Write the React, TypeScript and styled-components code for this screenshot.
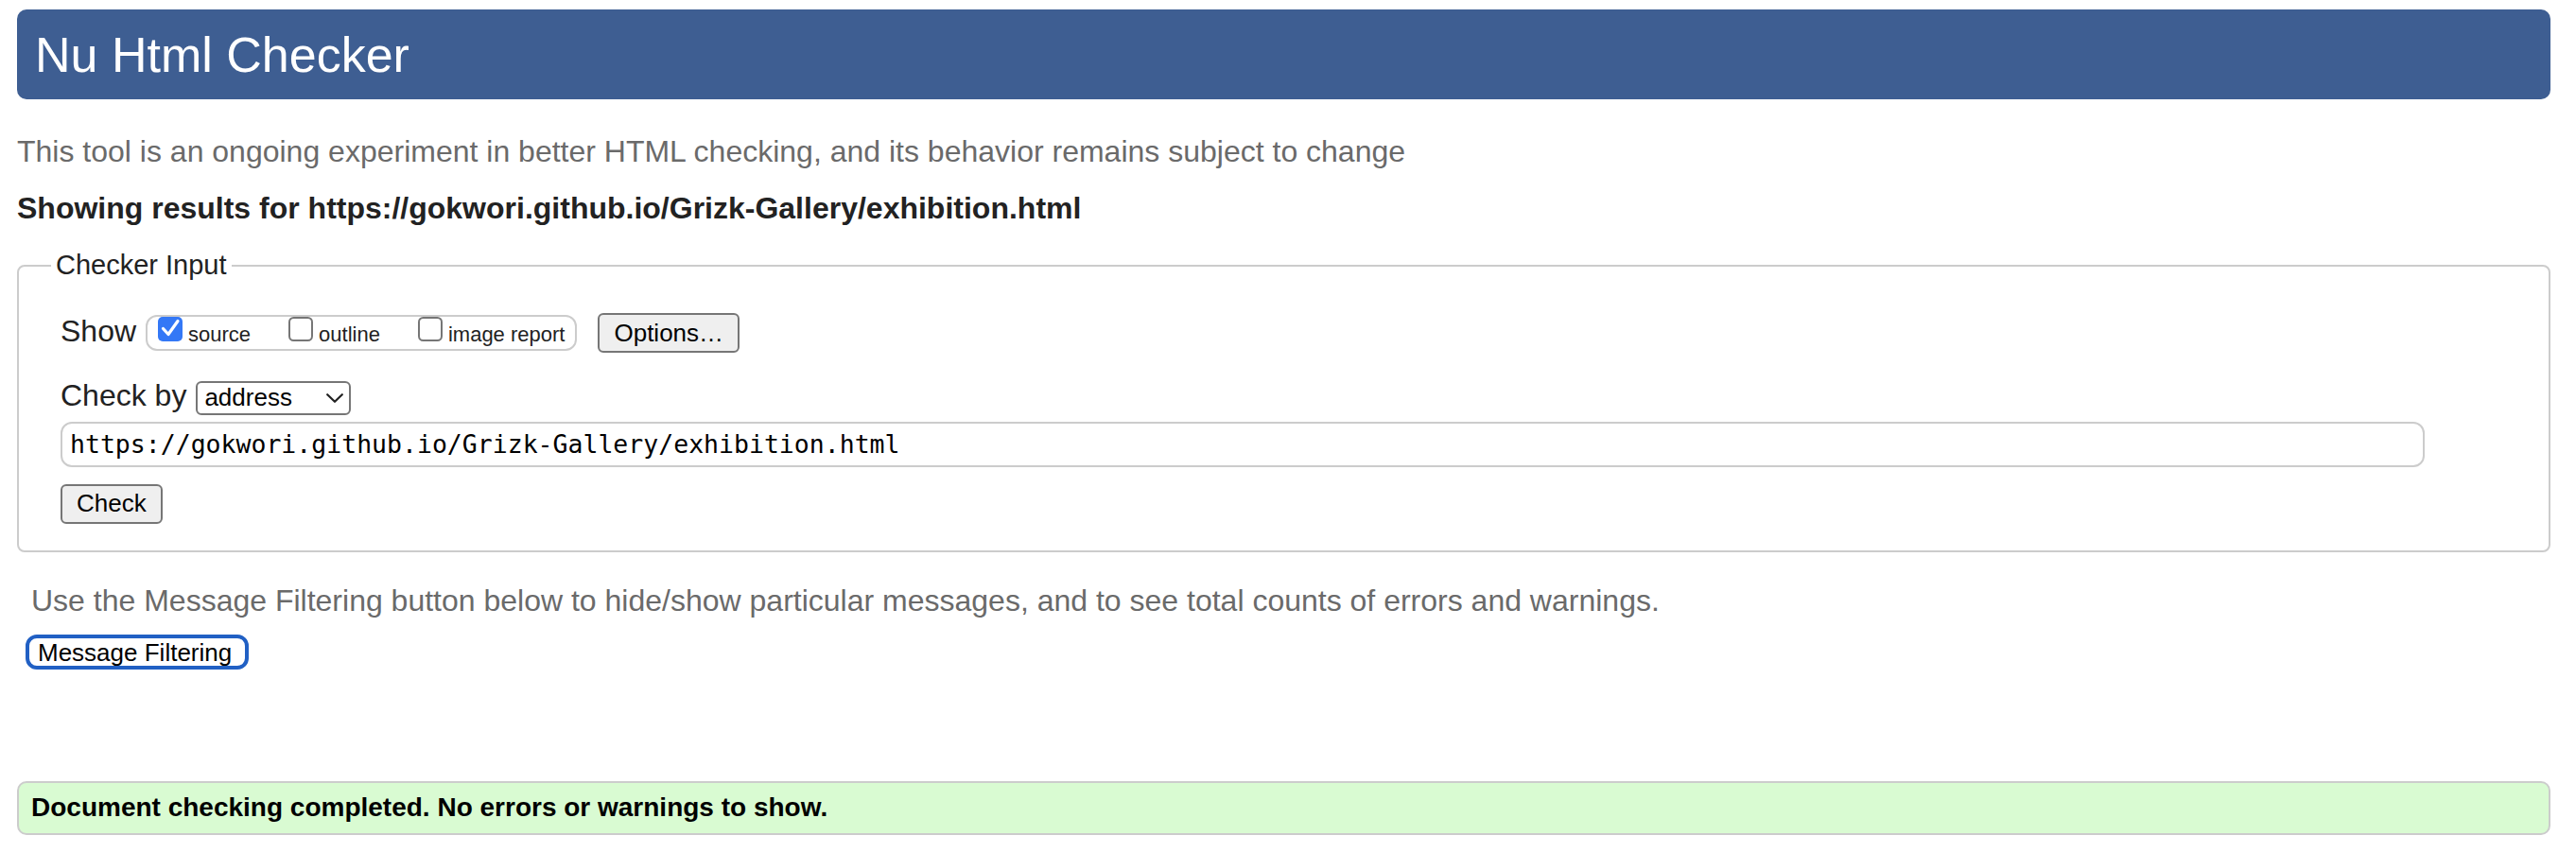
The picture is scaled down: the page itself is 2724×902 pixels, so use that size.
import React from "react";
import styled, { createGlobalStyle } from "styled-components";

const GlobalStyle = createGlobalStyle`
  html, body { margin: 0; padding: 0; background: #fff; }
  body {
    font-family: "Liberation Sans", Arial, Helvetica, sans-serif;
    color: #222;
  }
  *, *::before, *::after { box-sizing: border-box; }
`;

const Page = styled.main`
  padding: 10px 27px 0 18px;
`;

const Banner = styled.h1`
  margin: 0;
  height: 95px;
  padding: 0 19px;
  display: flex;
  align-items: center;
  background: #3e5e92;
  color: #fff;
  font-size: 52px;
  font-weight: 400;
  border-radius: 10px;
`;

const Note = styled.p<{ $strong?: boolean; $gap: number }>`
  margin: ${(p) => p.$gap}px 0 0;
  font-size: 32px;
  line-height: 36px;
  font-weight: ${(p) => (p.$strong ? 700 : 400)};
  color: ${(p) => (p.$strong ? "#222" : "#6a6a6a")};
`;

const CheckerFieldset = styled.fieldset`
  margin: 26px 0 0;
  padding: 34px 44px 28px 44px;
  border: 2px solid #ccc;
  border-radius: 8px;
  min-width: 0;
`;

const CheckerLegend = styled.legend`
  margin-left: -10px;
  padding: 0 5px;
  font-size: 29px;
  line-height: 33px;
  color: #222;
`;

const FormRow = styled.div<{ $mt?: number }>`
  display: flex;
  align-items: baseline;
  gap: 10px;
  margin-top: ${(p) => p.$mt ?? 0}px;
`;

const FieldLabel = styled.span`
  font-size: 32px;
  line-height: 36px;
  color: #222;
`;

const ToggleGroup = styled.div`
  display: flex;
  align-items: baseline;
  gap: 40px;
  height: 38px;
  padding: 0 11px;
  border: 2px solid #ccc;
  border-radius: 12px;
`;

const Toggle = styled.label`
  display: flex;
  align-items: baseline;
  gap: 6px;
`;

const TickSvg = styled.svg`
  display: block;
  width: 26px;
  height: 26px;
  flex: none;
`;

const ToggleText = styled.span`
  font-size: 22px;
  line-height: 22px;
  color: #222;
`;

const PushButton = styled.button<{ $ml?: number }>`
  display: block;
  height: 42px;
  margin-left: ${(p) => p.$ml ?? 0}px;
  padding: 0 15px;
  border: 2px solid #767676;
  border-radius: 6px;
  background: #efefef;
  font-family: "Liberation Sans", Arial, sans-serif;
  font-size: 26px;
  color: #000;
`;

const SelectBox = styled.div`
  display: flex;
  align-items: center;
  justify-content: space-between;
  width: 164px;
  height: 36px;
  padding: 0 6px 0 7px;
  border: 2px solid #767676;
  border-radius: 6px;
  background: #fff;
  font-size: 26px;
  color: #000;
`;

const UrlField = styled.input`
  display: block;
  width: 2500px;
  height: 48px;
  margin-top: 7px;
  padding: 0 8px;
  border: 2px solid #ccc;
  border-radius: 12px;
  font-family: "DejaVu Sans Mono", "Liberation Mono", monospace;
  font-size: 26.5px;
  color: #000;
  background: #fff;
  outline: none;
`;

const SubmitWrap = styled.div`
  margin-top: 18px;
`;

const FilterSection = styled.section`
  padding-left: 9px;
`;

const Hint = styled.p`
  margin: 33px 0 0 6px;
  font-size: 32px;
  line-height: 36px;
  color: #6a6a6a;
`;

const FilterButton = styled.button`
  display: block;
  height: 37px;
  margin-top: 18px;
  padding: 0 14px 0 9px;
  border: 4px solid #2160c4;
  border-radius: 12px;
  background: #fff;
  font-family: "Liberation Sans", Arial, sans-serif;
  font-size: 26px;
  color: #000;
`;

const StatusBox = styled.div`
  margin-top: 118px;
  padding: 10.5px 13px;
  border: 2px solid #ccc;
  border-radius: 10px;
  background: #d9fbd2;
  font-size: 28px;
  line-height: 32px;
  font-weight: 700;
  color: #000;
`;

function Tick({ checked }: { checked?: boolean }) {
  return (
    <TickSvg viewBox="0 0 26 26" aria-hidden="true">
      {checked ? (
        <>
          <rect x="0" y="0" width="26" height="26" rx="5" fill="#3478f6" />
          <path
            d="M5.5 12.5 L11 18.5 L21 4.5"
            fill="none"
            stroke="#fff"
            strokeWidth="3.2"
            strokeLinecap="round"
            strokeLinejoin="round"
          />
        </>
      ) : (
        <rect x="1" y="1" width="24" height="24" rx="4.5" fill="#fff" stroke="#767676" strokeWidth="2" />
      )}
    </TickSvg>
  );
}

function Chevron() {
  return (
    <svg width="18" height="10" viewBox="0 0 18 10" aria-hidden="true">
      <path d="M1.2 1.2 L9 8.8 L16.8 1.2" fill="none" stroke="#222" strokeWidth="2.2" strokeLinecap="round" strokeLinejoin="round" />
    </svg>
  );
}

const toggles = [
  { label: "source", checked: true },
  { label: "outline", checked: false },
  { label: "image report", checked: false },
];

export default function App() {
  const url = "https://gokwori.github.io/Grizk-Gallery/exhibition.html";
  return (
    <>
      <GlobalStyle />
      <Page>
        <Banner>Nu Html Checker</Banner>
        <Note $gap={37}>
          This tool is an ongoing experiment in better HTML checking, and its behavior remains subject to change
        </Note>
        <Note $gap={24} $strong>
          Showing results for {url}
        </Note>
        <CheckerFieldset>
          <CheckerLegend>Checker Input</CheckerLegend>
          <FormRow>
            <FieldLabel>Show</FieldLabel>
            <ToggleGroup>
              {toggles.map((t) => (
                <Toggle key={t.label}>
                  <Tick checked={t.checked} />
                  <ToggleText>{t.label}</ToggleText>
                </Toggle>
              ))}
            </ToggleGroup>
            <PushButton type="button" $ml={12}>
              Options…
            </PushButton>
          </FormRow>
          <FormRow $mt={27}>
            <FieldLabel>Check by</FieldLabel>
            <SelectBox>
              <span>address</span>
              <Chevron />
            </SelectBox>
          </FormRow>
          <UrlField type="url" defaultValue={url} readOnly />
          <SubmitWrap>
            <PushButton type="button">Check</PushButton>
          </SubmitWrap>
        </CheckerFieldset>
        <FilterSection>
          <Hint>
            Use the Message Filtering button below to hide/show particular messages, and to see total counts of errors and warnings.
          </Hint>
          <FilterButton type="button">Message Filtering</FilterButton>
        </FilterSection>
        <StatusBox>Document checking completed. No errors or warnings to show.</StatusBox>
      </Page>
    </>
  );
}
